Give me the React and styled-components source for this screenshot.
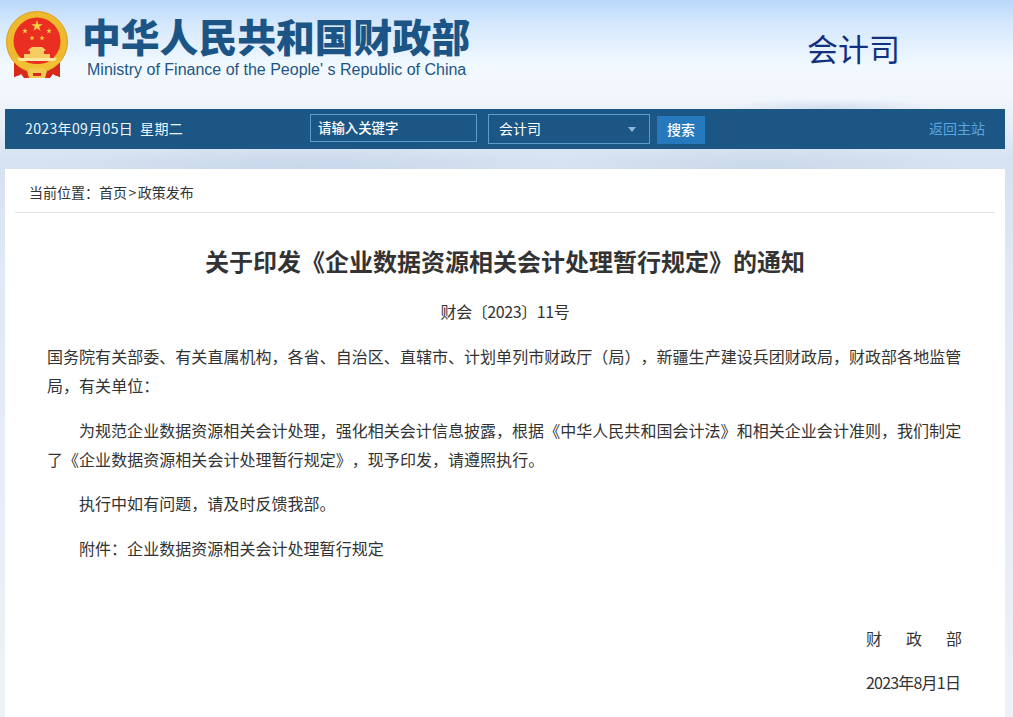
import React from "react";
import styled, { createGlobalStyle } from "styled-components";

const Global = createGlobalStyle`
  html, body {
    margin: 0;
    padding: 0;
  }
  body {
    font-family: "Liberation Sans", "Noto Sans CJK SC", sans-serif;
    background: #e6edf6;
    text-spacing-trim: space-all;
  }
`;

const Page = styled.div`
  height: 717px;
  overflow: hidden;
  padding: 0 8px 0 5px;
  background:
    radial-gradient(ellipse 110px 9px at 830px 108px, #d3dfee 0%, rgba(211, 223, 238, 0) 100%),
    radial-gradient(ellipse 260px 30px at 300px 172px, #c6d6ea 0%, rgba(198, 214, 234, 0) 100%),
    radial-gradient(ellipse 200px 28px at 760px 170px, #c9d8ea 0%, rgba(201, 216, 234, 0) 100%),
    linear-gradient(180deg, #b9d8fb 0%, #d5e8fd 24px, #f2f9ff 66px, #f3f7fc 92px, #e6eef8 125px, #d6e2f1 160px, #dfe8f4 260px, #eef2f8 717px);
`;

const Header = styled.header`
  display: flex;
  height: 109px;
  margin-left: -5px;
`;

const Emblem = styled.svg`
  width: 64px;
  height: 68px;
  margin: 11px 0 0 5px;
  flex: none;
`;

const Brand = styled.div`
  margin: 14px 0 0 13px;
  width: 400px;
  flex: none;
`;

const BrandName = styled.div`
  font-family: "Noto Sans CJK SC", sans-serif;
  font-weight: 900;
  font-size: 38.8px;
  line-height: 42px;
  color: #1c5585;
  white-space: nowrap;
`;

const BrandEnglish = styled.div`
  margin: 5px 0 0 5px;
  font-size: 16px;
  line-height: 18px;
  color: #1c5585;
  white-space: nowrap;
`;

const DeptName = styled.div`
  margin: 27px 0 0 325px;
  font-family: "Noto Sans CJK SC", sans-serif;
  font-size: 31px;
  line-height: 42px;
  color: #12307e;
  white-space: nowrap;
`;

const Bar = styled.div`
  display: flex;
  align-items: flex-start;
  height: 40px;
  width: 1000px;
  background: #1b5685;
  color: #fff;
  font-family: "Noto Sans CJK SC", sans-serif;
  font-size: 14px;
`;

const DateText = styled.div`
  width: 305px;
  flex: none;
  padding-left: 20px;
  box-sizing: border-box;
  line-height: 38px;
  white-space: pre;
  letter-spacing: 0.36px;
  color: #eef7ff;
`;

const SearchBox = styled.div`
  width: 167px;
  height: 28px;
  margin-top: 5px;
  box-sizing: border-box;
  border: 1px solid #5b9ccf;
  padding-left: 7px;
  font-size: 13.4px;
  font-weight: 500;
  line-height: 24px;
  flex: none;
`;

const Select = styled.div`
  display: flex;
  align-items: center;
  justify-content: space-between;
  width: 162px;
  height: 30px;
  margin: 5px 0 0 11px;
  padding: 0 13px 2px 10px;
  box-sizing: border-box;
  border: 1px solid #5b9ccf;
  flex: none;
`;

const Caret = styled.span`
  width: 0;
  height: 0;
  margin-top: 2px;
  border-left: 4.5px solid transparent;
  border-right: 4.5px solid transparent;
  border-top: 5px solid #8db9dc;
`;

const SearchButton = styled.div`
  width: 48px;
  height: 28px;
  margin: 7px 0 0 7px;
  background: #2679bd;
  text-align: center;
  line-height: 27px;
  font-weight: 500;
  flex: none;
`;

const HomeLink = styled.a`
  margin-left: auto;
  margin-right: 20px;
  line-height: 38px;
  color: #5aa6df;
`;

const Card = styled.main`
  width: 1000px;
  height: 560px;
  margin-top: 20px;
  padding: 0 10px;
  box-sizing: border-box;
  background: #fff;
  color: #333;
  font-family: "Noto Sans CJK SC", sans-serif;
`;

const Crumbs = styled.div`
  height: 43px;
  padding-left: 14px;
  line-height: 47px;
  font-size: 14px;
  color: #333;
  border-bottom: 1px solid #e3e3e3;
`;

const CrumbSep = styled.span`
  margin: 0 1.5px;
`;

const Title = styled.h1`
  margin: 30px 0 0;
  font-size: 24px;
  font-weight: 700;
  line-height: 36px;
  text-align: center;
  color: #333;
`;

const DocNumber = styled.div`
  margin-top: 17px;
  font-size: 16px;
  letter-spacing: -0.4px;
  line-height: 30px;
  text-align: center;
`;

const Body = styled.div`
  margin-top: 16px;
  padding: 0 32px;
  font-size: 16px;
  line-height: 29px;
  letter-spacing: 0.04px;
`;

const Para = styled.p`
  margin: 0 0 15.5px;
  text-indent: ${(p) => (p.$indent ? "2em" : "0")};
`;

const SignBlock = styled.div`
  margin: 61px 1px 0 auto;
  width: 96px;
`;

const SignName = styled.div`
  display: flex;
  justify-content: space-between;
  margin-bottom: 15px;
`;

const SignDate = styled.div`
  white-space: nowrap;
  letter-spacing: -0.8px;
`;

function NationalEmblem() {
  const star = (cx, cy, r) => {
    const pts = [];
    for (let i = 0; i < 10; i++) {
      const rad = i % 2 ? r * 0.38 : r;
      const a = -Math.PI / 2 + (i * Math.PI) / 5;
      pts.push(`${(cx + rad * Math.cos(a)).toFixed(2)},${(cy + rad * Math.sin(a)).toFixed(2)}`);
    }
    return <polygon points={pts.join(" ")} fill="#f8d443" />;
  };
  return (
    <Emblem viewBox="0 0 64 68">
      {/* ribbon behind the ring */}
      <path d="M9 50 H55 L55 66 L48 63 L45 67 H19 L16 63 L9 66 Z" fill="#d9281c" />
      <circle cx="32" cy="31" r="30.5" fill="#eeb92c" stroke="#dca021" strokeWidth="1" />
      <circle cx="32" cy="30" r="23.5" fill="#ea2f22" />
      {star(32, 15, 6)}
      {star(20, 20, 3)}
      {star(44, 20, 3)}
      {star(27, 27, 2.8)}
      {star(37, 27, 2.8)}
      {/* gate */}
      <path d="M23 39 L27 36 H37 L41 39 L39 40 V43 H45 V47 H19 V43 H25 V40 Z" fill="#f5cd62" />
      <path d="M12 47 H52 L50 50 H14 Z" fill="#fbe6a2" />
      {/* wheat band and knot */}
      <path d="M6 44 Q12 52 32 53 Q52 52 58 44 Q54 59 32 60 Q10 59 6 44 Z" fill="#f1c034" />
      <path d="M10 53 L16 58 L15 64 L9 66 Z M54 53 L48 58 L49 64 L55 66 Z" fill="#d9281c" />
      <path d="M22 60 Q27 55 32 58 Q37 55 42 60 L40 67 H24 Z" fill="#f2cb52" />
      <path d="M28 62 H36 V65 H28 Z" fill="#d9281c" />
    </Emblem>
  );
}

export default function App() {
  return (
    <>
      <Global />
      <Page>
        <Header>
          <NationalEmblem />
          <Brand>
            <BrandName>中华人民共和国财政部</BrandName>
            <BrandEnglish>Ministry of Finance of the People' s Republic of China</BrandEnglish>
          </Brand>
          <DeptName>会计司</DeptName>
        </Header>
        <Bar>
          <DateText>2023年09月05日  星期二</DateText>
          <SearchBox>请输入关键字</SearchBox>
          <Select>
            会计司
            <Caret />
          </Select>
          <SearchButton>搜索</SearchButton>
          <HomeLink>返回主站</HomeLink>
        </Bar>
        <Card>
          <Crumbs>
            当前位置：首页<CrumbSep>&gt;</CrumbSep>政策发布
          </Crumbs>
          <Title>关于印发《企业数据资源相关会计处理暂行规定》的通知</Title>
          <DocNumber>财会〔2023〕11号</DocNumber>
          <Body>
            <Para>
              国务院有关部委、有关直属机构，各省、自治区、直辖市、计划单列市财政厅（局），新疆生产建设兵团财政局，财政部各地监管局，有关单位：
            </Para>
            <Para $indent>
              为规范企业数据资源相关会计处理，强化相关会计信息披露，根据《中华人民共和国会计法》和相关企业会计准则，我们制定了《企业数据资源相关会计处理暂行规定》，现予印发，请遵照执行。
            </Para>
            <Para $indent>执行中如有问题，请及时反馈我部。</Para>
            <Para $indent>附件：企业数据资源相关会计处理暂行规定</Para>
            <SignBlock>
              <SignName>
                <span>财</span>
                <span>政</span>
                <span>部</span>
              </SignName>
              <SignDate>2023年8月1日</SignDate>
            </SignBlock>
          </Body>
        </Card>
      </Page>
    </>
  );
}
